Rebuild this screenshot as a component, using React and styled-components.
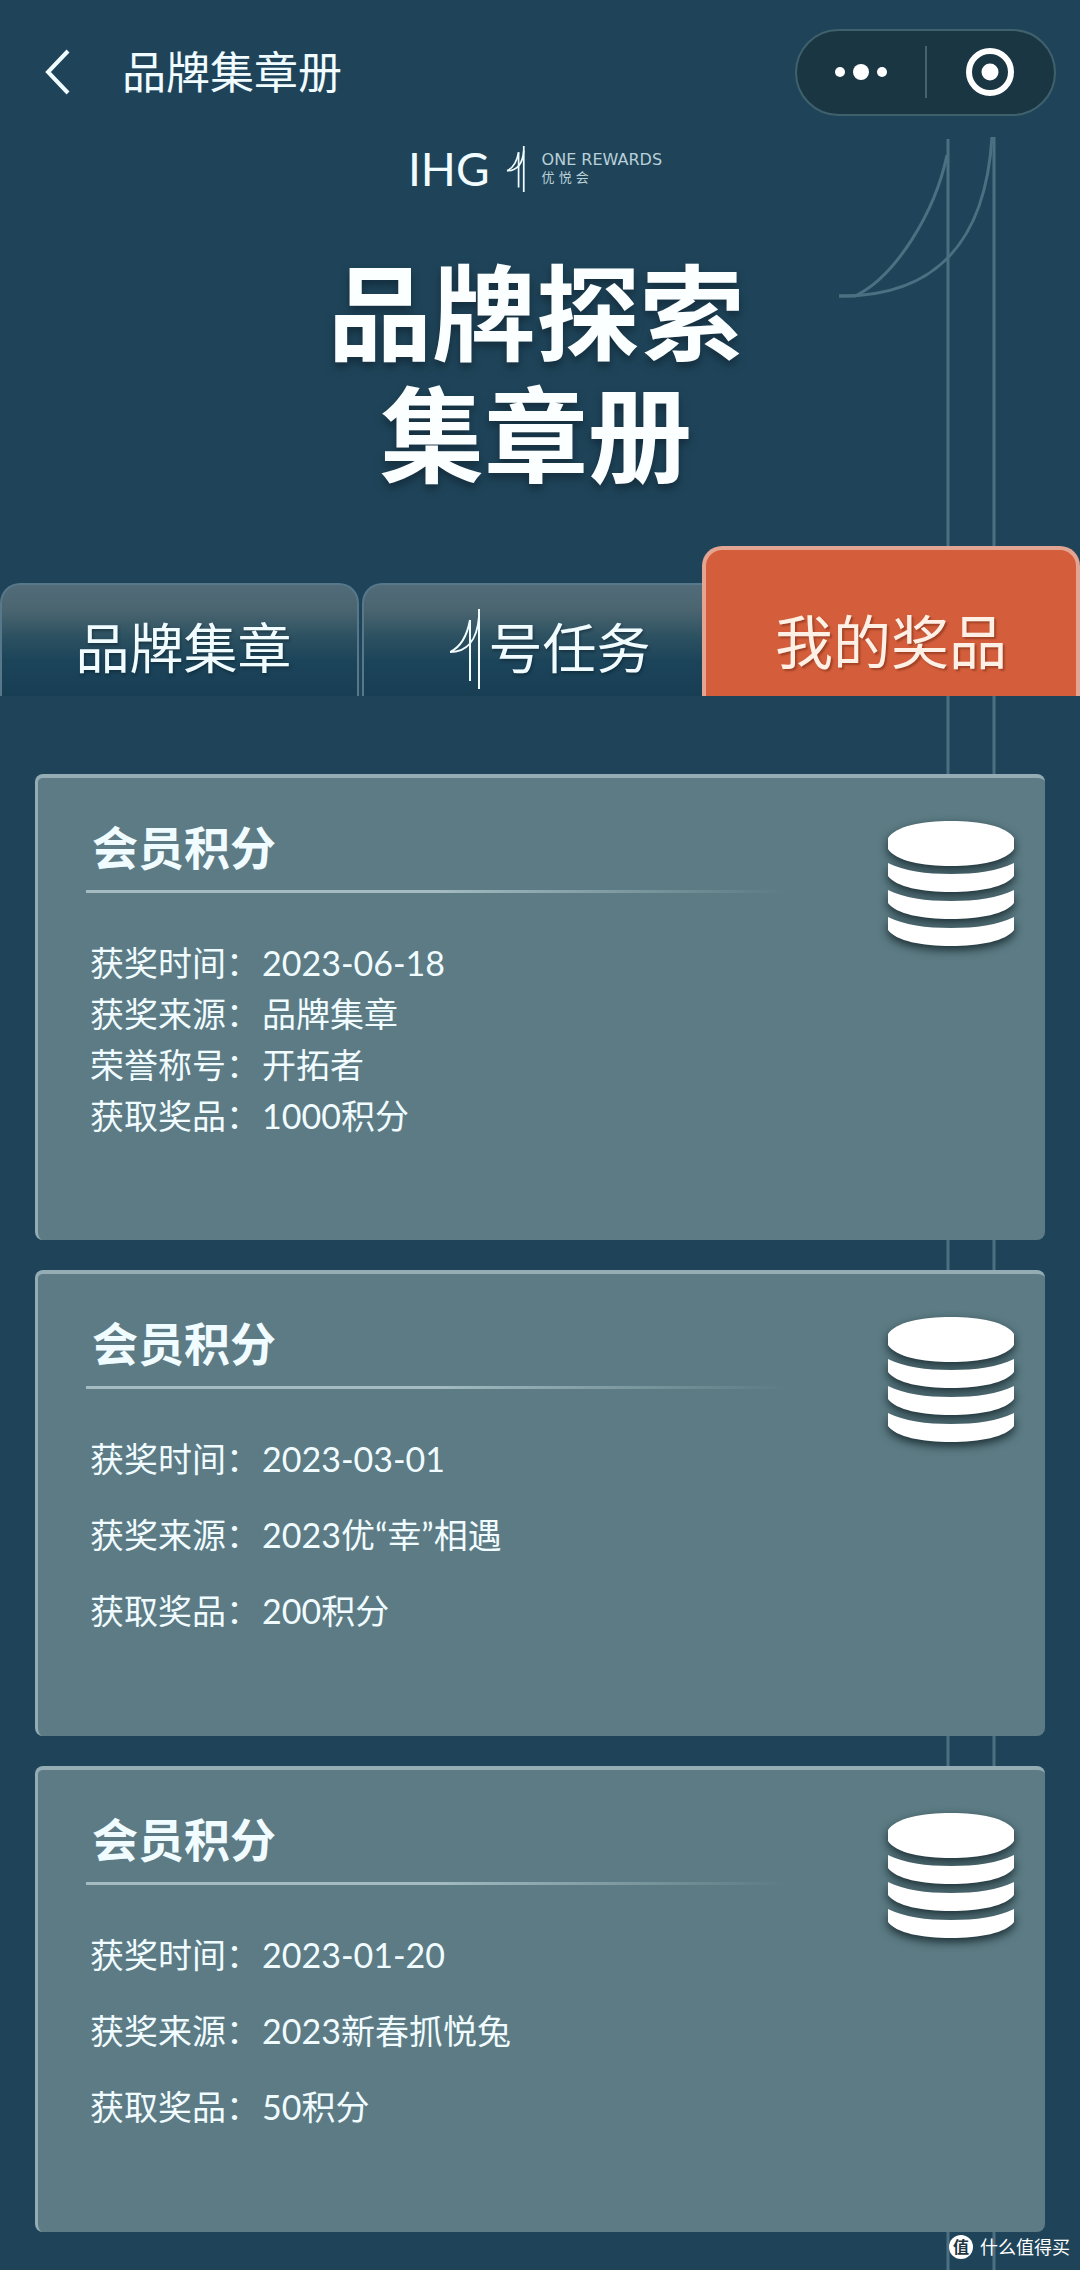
import styled, { createGlobalStyle, css } from "styled-components";

const tabs = [
  { id: "stamps", label: "品牌集章" },
  { id: "tasks", label: "号任务", mark: true },
  { id: "prizes", label: "我的奖品", active: true },
];

const prizes = [
  {
    id: 1,
    title: "会员积分",
    rows: [
      ["获奖时间：", "2023-06-18"],
      ["获奖来源：", "品牌集章"],
      ["荣誉称号：", "开拓者"],
      ["获取奖品：", "1000积分"],
    ],
  },
  {
    id: 2,
    title: "会员积分",
    rows: [
      ["获奖时间：", "2023-03-01"],
      ["获奖来源：", "2023优“幸”相遇"],
      ["获取奖品：", "200积分"],
    ],
  },
  {
    id: 3,
    title: "会员积分",
    rows: [
      ["获奖时间：", "2023-01-20"],
      ["获奖来源：", "2023新春抓悦兔"],
      ["获取奖品：", "50积分"],
    ],
  },
];

function OneMark({ width, height, stroke }) {
  return (
    <svg width={width} height={height} viewBox="0 0 31 80" fill="none" stroke="#f0fcff" strokeWidth={stroke} aria-hidden="true">
      <path d="M29 0V80M20 11V72" />
      <path d="M0 43C11 38 17 27 20 11" />
      <path d="M0 43C16 43 27 32 29 8" />
    </svg>
  );
}

function Coins() {
  return (
    <CoinsIcon viewBox="0 0 126 125" aria-hidden="true">
      <path d="M0 17C8 5 34 0 63 0S118 5 126 17V28C118 40 92 45 63 45S8 40 0 28Z" />
      <path d="M0 42C16 50 38 53 63 53S110 50 126 42V55C118 66 92 71 63 71S8 66 0 55Z" />
      <path d="M0 69C16 77 38 80 63 80S110 77 126 69V82C118 93 92 98 63 98S8 93 0 82Z" />
      <path d="M0 96C16 104 38 107 63 107S110 104 126 96V109C118 120 92 125 63 125S8 120 0 109Z" />
    </CoinsIcon>
  );
}

export default function App() {
  return (
    <Page>
      <GlobalStyle />
      <Backdrop aria-hidden="true">
        <path d="M109 2V2140M155 0V2140" />
        <path d="M0 159H16C56 140 96 76 108 18" />
        <path d="M0 159C88 160 146 114 153 0" />
      </Backdrop>
      <Nav>
        <BackButton type="button" aria-label="返回">
          <svg width="26" height="46" viewBox="0 0 26 46" fill="none" stroke="#f0fcff" strokeWidth="4">
            <path d="M24 2L4 23L24 44" />
          </svg>
        </BackButton>
        <NavTitle>品牌集章册</NavTitle>
        <Capsule>
          <CapsuleButton type="button" aria-label="更多">
            <svg width="52" height="18" viewBox="0 0 52 18" fill="#ffffff">
              <circle cx="5" cy="9" r="5" />
              <circle cx="26" cy="9" r="8" />
              <circle cx="47" cy="9" r="5" />
            </svg>
          </CapsuleButton>
          <CapsuleLine />
          <CapsuleButton type="button" aria-label="关闭">
            <svg width="48" height="48" viewBox="0 0 48 48">
              <circle cx="24" cy="24" r="21" fill="none" stroke="#ffffff" strokeWidth="6" />
              <circle cx="24" cy="24" r="8.5" fill="#ffffff" />
            </svg>
          </CapsuleButton>
        </Capsule>
      </Nav>

      <Logo>
        <LogoName>IHG</LogoName>
        <OneMark width={22} height={46} stroke={3} />
        <LogoText>
          <span>ONE REWARDS</span>
          <span>优 悦 会</span>
        </LogoText>
      </Logo>
      <Title>
        品牌探索
        <br />
        集章册
      </Title>

      <Tabs role="tablist">
        {tabs.map((tab) => (
          <Tab key={tab.id} type="button" role="tab" aria-selected={!!tab.active} $active={tab.active} $mark={tab.mark}>
            {tab.mark && <OneMark width={31} height={80} stroke={2} />}
            {tab.label}
          </Tab>
        ))}
      </Tabs>

      <List>
        {prizes.map((prize) => (
          <Card key={prize.id}>
            <CardMain>
              <CardTitle>{prize.title}</CardTitle>
              <Divider />
              <Rows $loose={prize.rows.length < 4}>
                {prize.rows.map(([label, value]) => (
                  <Row key={label}>
                    <dt>{label}</dt>
                    <dd>{value}</dd>
                  </Row>
                ))}
              </Rows>
            </CardMain>
            <Coins />
          </Card>
        ))}
      </List>

      <Watermark>
        <Badge>值</Badge>
        什么值得买
      </Watermark>
    </Page>
  );
}

const GlobalStyle = createGlobalStyle`
  * {
    box-sizing: border-box;
  }
  body {
    margin: 0;
    background-color: #1f4459;
  }
  button {
    border: none;
    padding: 0;
    background: none;
    color: inherit;
    font-family: inherit;
  }
`
const Page = styled.div`
  position: relative;
  min-height: 100vh;
  overflow: hidden;
  font-family: Lato, "Noto Sans CJK SC", sans-serif;
  color: #f0fcff;
  background-color: #1f4459;
`
const Backdrop = styled.svg`
  position: absolute;
  top: 137px;
  right: 84px;
  width: 157px;
  height: calc(100% - 137px);
  fill: none;
  stroke: #4c7082;
  stroke-width: 3px;
`
const Nav = styled.header`
  position: relative;
  display: flex;
  align-items: center;
  height: 144px;
  padding: 0 24px 0 44px;
`
const BackButton = styled.button`
  display: flex;
  margin-right: 52px;
`
const NavTitle = styled.div`
  flex: 1;
  font-size: 44px;
  line-height: 64px;
`
const Capsule = styled.div`
  display: flex;
  align-items: center;
  width: 261px;
  height: 87px;
  border: 2px solid #3f616c;
  border-radius: 44px;
  background-color: #1a3642;
`
const CapsuleButton = styled.button`
  flex: 1;
  display: flex;
  align-items: center;
  justify-content: center;
  height: 100%;
`
const CapsuleLine = styled.div`
  width: 2px;
  height: 52px;
  background-color: #48626d;
`
const Logo = styled.div`
  position: relative;
  display: flex;
  align-items: center;
  justify-content: center;
  gap: 15px;
  height: 50px;
  padding-right: 10px;
`
const LogoName = styled.span`
  font-size: 46px;
  line-height: 48px;
`
const LogoText = styled.div`
  display: flex;
  flex-direction: column;
  font-family: "DejaVu Sans", "Noto Sans CJK SC", sans-serif;
  font-size: 16px;
  line-height: 18px;
  color: #b9d0d8;

  span + span {
    font-size: 13px;
  }
`
const Title = styled.h1`
  position: relative;
  margin: 62px 0 0;
  padding-right: 8px;
  font-family: "Liberation Sans", "Noto Sans CJK SC", sans-serif;
  font-size: 104px;
  font-weight: 700;
  line-height: 122px;
  text-align: center;
  color: #fcffff;
  text-shadow: 0 5px 8px rgba(12, 30, 42, 0.6);
`
const Tabs = styled.div`
  position: relative;
  display: grid;
  grid-template-columns: 359fr 343fr 378fr;
  align-items: end;
  margin-top: 46px;
`
const Tab = styled.button`
  display: flex;
  align-items: center;
  justify-content: center;
  height: 113px;
  padding: 16px 0 0 8px;
  border: 2px solid #56788a;
  border-bottom: none;
  border-radius: 20px 20px 0 0;
  font-size: 54px;
  line-height: 72px;
  background: linear-gradient(#516b79, #4b6570 22%, #2b5060 48%, #1b4359 70%, #183e54);
  text-shadow: 1px 2px 3px rgba(10, 30, 42, 0.5);

  ${(props) => props.$mark && css`
    gap: 8px;
    margin-left: 3px;
    padding-left: 34px;
    border-right: none;
    border-radius: 20px 0 0 0;

    svg {
      flex: none;
    }
  `}

  ${(props) => props.$active && css`
    height: 150px;
    padding: 38px 0 0;
    border: 4px solid #e3a491;
    border-bottom: none;
    font-size: 58px;
    color: #fff0e6;
    background: #d45e3b;
    text-shadow: 2px 2px 2px rgba(110, 40, 20, 0.5);
  `}
`
const List = styled.main`
  position: relative;
  display: flex;
  flex-direction: column;
  gap: 30px;
  padding: 78px 35px 38px;
`
const Card = styled.section`
  display: flex;
  justify-content: space-between;
  min-height: 466px;
  padding: 36px 31px 36px 48px;
  border-top: 4px solid #94adb4;
  border-left: 3px solid #94adb4;
  border-radius: 8px;
  background-color: #5c7b84;
`
const CardMain = styled.div`
  width: 700px;
`
const CardTitle = styled.h2`
  margin: 0;
  padding: 2px 0 0 6px;
  font-size: 46px;
  font-weight: 700;
  line-height: 64px;
`
const Divider = styled.div`
  height: 3px;
  margin-top: 10px;
  background: linear-gradient(90deg, #a3bbc1 50%, rgba(163, 187, 193, 0));
`
const Rows = styled.dl`
  display: flex;
  flex-direction: column;
  gap: ${(props) => (props.$loose ? "25px" : "0")};
  margin: 44px 0 0;
  padding-left: 4px;
`
const Row = styled.div`
  display: flex;
  gap: 2px;
  font-size: 34px;
  line-height: 51px;

  dd {
    margin: 0;
  }
`
const CoinsIcon = styled.svg`
  flex: none;
  width: 126px;
  height: 125px;
  margin-top: 7px;
  overflow: visible;
  fill: #ffffff;
  filter: drop-shadow(0 4px 5px rgba(20, 38, 42, 0.9));
`
const Watermark = styled.div`
  position: absolute;
  right: 10px;
  bottom: 11px;
  display: flex;
  align-items: center;
  gap: 7px;
  font-size: 18px;
  line-height: 24px;
  color: #ffffff;
`
const Badge = styled.span`
  width: 24px;
  height: 24px;
  border-radius: 50%;
  font-size: 16px;
  font-weight: 700;
  line-height: 23px;
  text-align: center;
  color: #1f3440;
  background-color: #ffffff;
`
